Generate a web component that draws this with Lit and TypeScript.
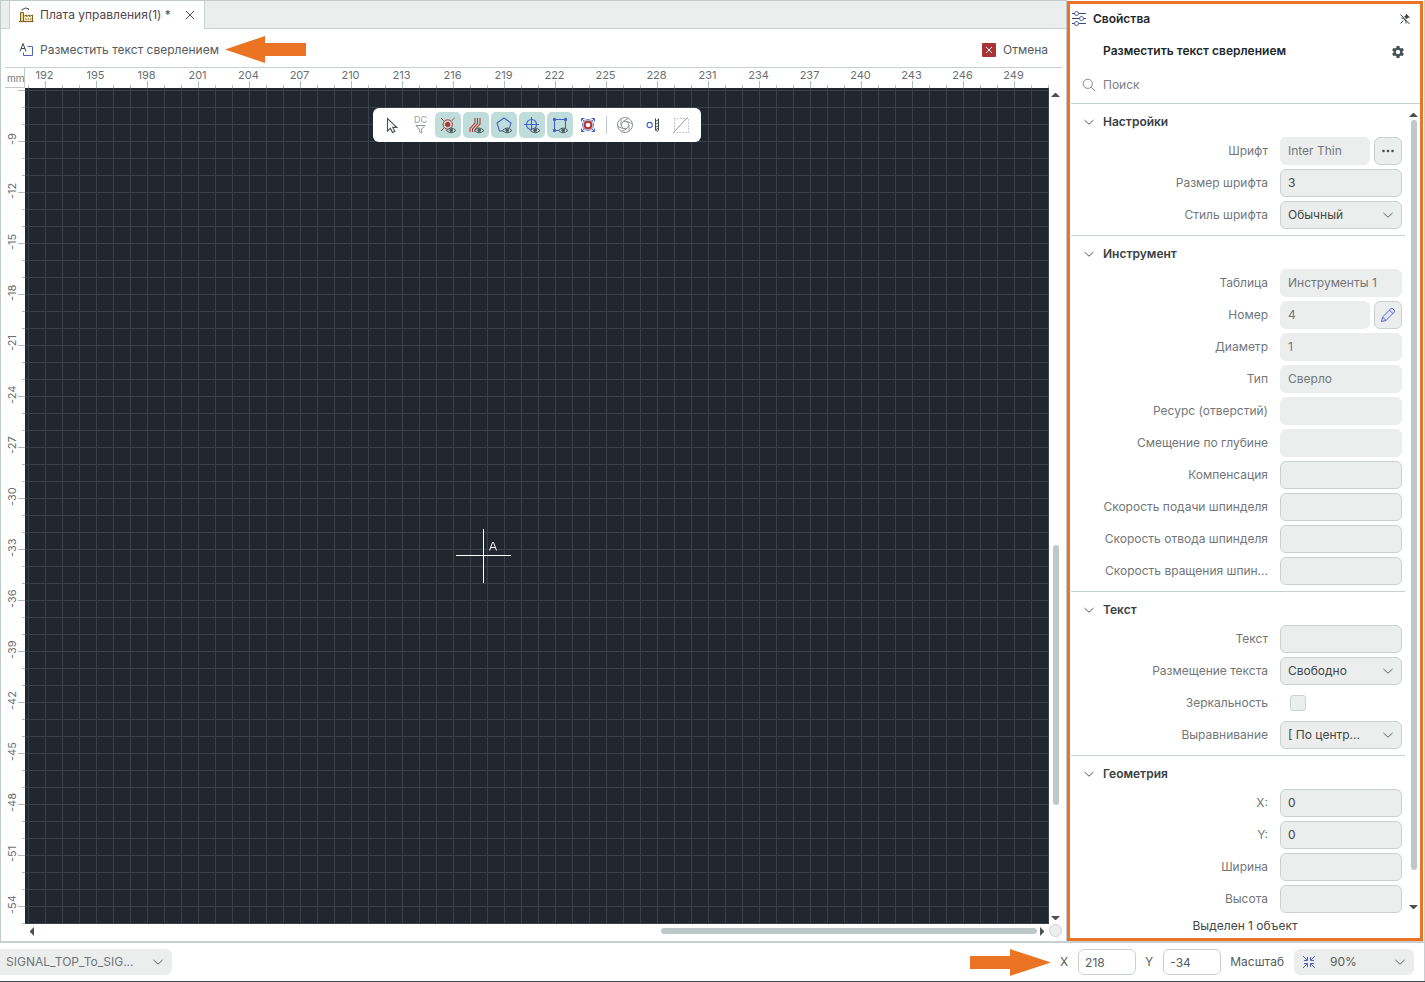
import { LitElement, html, css, svg, nothing } from "lit";
import { customElement } from "lit/decorators.js";

const eye = svg`<g fill="none" stroke="#4b5a5b"><path d="M8.500 15.500q4.700-5 9.400 0q-4.700 4.600-9.400 0z" fill="#bfdedb"/><circle cx="13.200" cy="15.300" r="1.400" fill="#4b5a5b"/></g>`;
const ORANGE = "#ea7423";

const toolIcons = {
  cursor: svg`<path d="M5.500 3.500v12.500l3-2.600 2 4.100 2.300-1-2-4.100h4z" fill="none" stroke="#4a4f55" stroke-width="1.100"/>`,
  dc: svg`<text x="10.500" y="8" text-anchor="middle" font-size="9" fill="#9a9fa1">DC</text><path d="M6 10.500h9l-3.300 3.500v4l-2.400-1.500v-2.500z" fill="none" stroke="#8f9496"/>`,
  pad: svg`<g fill="none" stroke="#b5332f"><circle cx="9.700" cy="9.500" r="4.700"/><circle cx="9.700" cy="9.500" r="2.200" fill="#b5332f"/><path d="M3 3l2.800 2.800M16.500 3l-2.800 2.800M3 16l2.800-2.800"/></g>${eye}`,
  tracks: svg`<g fill="none" stroke="#b5332f" stroke-width="1.100"><path d="M4 17v-3.500l5-5.500v-5M6.500 17v-3l5-5.500v-5.500M9 17v-2.500l5-5.500v-6"/></g>${eye}`,
  polygon: svg`<path d="M10 3l7 5-2.500 8h-9l-2.500-8z" fill="none" stroke="#4461c9" stroke-width="1.100"/>${eye}`,
  target: svg`<g fill="none" stroke="#4461c9" stroke-width="1.100"><circle cx="9.500" cy="9.500" r="5"/><path d="M9.500 2v15M2 9.500h15"/></g>${eye}`,
  rect: svg`<g fill="none" stroke="#4461c9" stroke-width="1.100"><path d="M5 4.500h10M4.500 5v10M15.500 5v10M5 15.500h10"/><circle cx="4.500" cy="4.500" r="1.100" fill="#4461c9"/><circle cx="15.500" cy="4.500" r="1.100" fill="#4461c9"/><circle cx="4.500" cy="15.500" r="1.100" fill="#4461c9"/></g>${eye}`,
  snap: svg`<g fill="none"><path d="M3.500 6.500v-3h3M13.500 3.500h3v3M16.500 13.500v3h-3M6.500 16.500h-3v-3M3.500 3.500l3 3M16.500 3.500l-3 3M3.500 16.500l3-3M16.500 16.500l-3-3" stroke="#4461c9"/><circle cx="10" cy="10" r="5.500" stroke="#4461c9" stroke-width=".8"/><circle cx="10" cy="10" r="3.400" stroke="#b5332f" stroke-width="2.200"/></g>`,
  aperture: svg`<g fill="none" stroke="#92979a"><circle cx="10" cy="10" r="7.500"/><path d="M8 6.500h4l2 3.500-2 3.500h-4l-2-3.500zM8 6.500l5.500-3.200M12 6.500l5.300 2M14 10v6.300M12 13.500l-5.500 3.200M8 13.500l-5.300-2M6 10v-6.300"/></g>`,
  drill: svg`<circle cx="6.700" cy="10" r="2.600" fill="none" stroke="#4461c9" stroke-width="1.100"/><path d="M12.500 3.500v11.500l1.500 1.500 1.500-1.500v-11.500M12.500 6.500l3-2M12.500 9.500l3-2M12.500 12.500l3-2M12.500 15l3-2" fill="none" stroke="#3f4448"/>`,
  hatch: svg`<g fill="none" stroke="#8f9496"><rect x="3.500" y="3.500" width="14" height="14" stroke-dasharray="1 2"/><path d="M2.500 17.500l14-15"/></g>`,
};

type ToolName = keyof typeof toolIcons;

const tools: { id: ToolName; title: string; on?: boolean }[] = [
  { id: "cursor", title: "Выбор" },
  { id: "dc", title: "Фильтр" },
  { id: "pad", title: "Площадки", on: true },
  { id: "tracks", title: "Проводники", on: true },
  { id: "polygon", title: "Полигоны", on: true },
  { id: "target", title: "Отверстия", on: true },
  { id: "rect", title: "Контуры", on: true },
  { id: "snap", title: "Привязка" },
];
const extraTools: { id: ToolName; title: string; on?: boolean }[] = [
  { id: "aperture", title: "Апертуры" },
  { id: "drill", title: "Сверло" },
  { id: "hatch", title: "Штриховка" },
];

interface Field {
  label: string;
  value?: string;
  kind?: "readonly" | "select" | "check";
  action?: "more" | "edit";
}

const sections: { title: string; fields: Field[] }[] = [
  {
    title: "Настройки",
    fields: [
      { label: "Шрифт", value: "Inter Thin", kind: "readonly", action: "more" },
      { label: "Размер шрифта", value: "3" },
      { label: "Стиль шрифта", value: "Обычный", kind: "select" },
    ],
  },
  {
    title: "Инструмент",
    fields: [
      { label: "Таблица", value: "Инструменты 1", kind: "readonly" },
      { label: "Номер", value: "4", kind: "readonly", action: "edit" },
      { label: "Диаметр", value: "1", kind: "readonly" },
      { label: "Тип", value: "Сверло", kind: "readonly" },
      { label: "Ресурс (отверстий)", kind: "readonly" },
      { label: "Смещение по глубине", kind: "readonly" },
      { label: "Компенсация" },
      { label: "Скорость подачи шпинделя" },
      { label: "Скорость отвода шпинделя" },
      { label: "Скорость вращения шпин..." },
    ],
  },
  {
    title: "Текст",
    fields: [
      { label: "Текст" },
      { label: "Размещение текста", value: "Свободно", kind: "select" },
      { label: "Зеркальность", kind: "check" },
      { label: "Выравнивание", value: "[ По центр...", kind: "select" },
    ],
  },
  {
    title: "Геометрия",
    fields: [
      { label: "X:", value: "0" },
      { label: "Y:", value: "0" },
      { label: "Ширина" },
      { label: "Высота" },
    ],
  },
];

const base = css`
  * { box-sizing: border-box; }
  svg { display: block; flex: none; }
  button, input, select { font: inherit; color: inherit; margin: 0; outline: none; }
  button { border: 0; padding: 0; background: none; display: flex; align-items: center; }
  .chevron { fill: none; stroke: #566062; stroke-width: 1; }
  .pick { position: relative; display: block; }
  .pick select { appearance: none; width: 100%; border: 0; background: #eceeed; }
  .pick .chevron { position: absolute; right: 8px; top: 50%; margin-top: -5px; pointer-events: none; }
`;

const chevron = html`<svg class="chevron" width="12" height="10" viewBox="0 0 12 10"><path d="M1.500 3L6 7.200l4.500-4.200" /></svg>`;
const triangle = (points: string, w: number, h: number) =>
  html`<svg width=${w} height=${h} viewBox="0 0 ${w} ${h}"><polygon points=${points} fill="#4b5254" /></svg>`;
const up = triangle("0,5 4,1 5,1 9,5", 9, 5);
const down = triangle("0,0 9,0 5,4 4,4", 9, 5);
const left = triangle("5,0 5,9 1,5 1,4", 5, 9);
const right = triangle("0,0 0,9 4,5 4,4", 5, 9);

@customElement("board-canvas")
export class BoardCanvas extends LitElement {
  static styles = [
    base,
    css`
      :host { display: grid; min-width: 0; min-height: 0; flex: 1; margin-right: 4px; overflow: hidden;
        grid-template-columns: 24px minmax(0, 1fr) 13px; grid-template-rows: 20px minmax(0, 1fr) 17px; }
      .corner { margin-left: 4px; border-right: 1px solid #c3cbca; border-bottom: 1px solid #c3cbca;
        font-size: 10px; line-height: 20px; padding-left: 2px; color: #74797b; }
      .top, .side { display: flex; overflow: hidden; font-size: 11px; color: #696f71; }
      .top { background:
          repeating-linear-gradient(90deg, #b4bcbb 0 1px, transparent 1px 51px) 20px 100% / 100% 7px no-repeat,
          repeating-linear-gradient(90deg, #b4bcbb 0 1px, transparent 1px 17px) 3px 100% / 100% 3px no-repeat; }
      .top span { flex: none; width: 51px; text-align: center; line-height: 15px; }
      .top span:first-child { margin-left: -6px; }
      .side { flex-direction: column; background:
          repeating-linear-gradient(180deg, #b4bcbb 0 1px, transparent 1px 51px) 100% 2px / 7px 100% no-repeat,
          repeating-linear-gradient(180deg, #b4bcbb 0 1px, transparent 1px 17px) 100% 2px / 3px 100% no-repeat; }
      .side span { flex: none; height: 51px; width: 20px; margin-left: 1px; writing-mode: vertical-rl; transform: rotate(180deg);
        text-align: center; line-height: 20px; }
      .side span:first-child { margin-top: 26px; }
      .board { position: relative; overflow: hidden; background-color: #20272f; background-image:
          repeating-linear-gradient(90deg, #39424a 0 1px, transparent 1px 17px),
          repeating-linear-gradient(180deg, #39424a 0 1px, transparent 1px 17px);
        background-position: -14px -15px; background-size: calc(100% + 17px) calc(100% + 17px); }
      .tools { position: absolute; top: 20px; left: 50%; transform: translateX(-50%); display: flex; align-items: center;
        gap: 2px; padding: 4px 7px 4px 6px; background: #fff; border-radius: 6px; }
      .tools button { width: 26px; height: 26px; justify-content: center; border-radius: 5px; }
      .tools .on { background: #bfdedb; }
      .split { width: 1px; height: 18px; margin: 0 3px; background: #c3cbca; }
      .cross { position: absolute; left: 431px; top: 440px; }
      .vbar { display: flex; flex-direction: column; align-items: center; padding: 4px 0 3px; }
      .vtrack { flex: 1; width: 6px; display: flex; flex-direction: column; }
      .hbar { grid-column: 1 / 3; display: flex; align-items: center; padding: 0 4px 3px 28px; }
      .htrack { flex: 1; display: flex; margin-right: 3px; }
      .thumb { background: #bdc9c8; border-radius: 3px; }
      .vtrack::before { content: ""; flex: 446; }
      .vtrack .thumb { flex: 259; }
      .vtrack::after { content: ""; flex: 110; }
      .htrack::before { content: ""; flex: 627; }
      .htrack .thumb { flex: 376; height: 6px; }
      .knob { width: 13px; height: 13px; border-radius: 50%; background: #ebeeed; border: 1px solid #cdd3d2; }
    `,
  ];

  private tool(t: { id: ToolName; title: string; on?: boolean }) {
    return html`<button class=${t.on ? "on" : ""} title=${t.title} aria-label=${t.title}>
      <svg width="20" height="20" viewBox="0 0 20 20" overflow="visible">${toolIcons[t.id]}</svg>
    </button>`;
  }

  render() {
    const xs = Array.from({ length: 20 }, (_, i) => 192 + i * 3);
    const ys = Array.from({ length: 16 }, (_, i) => -9 - i * 3);
    return html`
      <div class="corner">mm</div>
      <div class="top">${xs.map((x) => html`<span>${x}</span>`)}</div>
      <div></div>
      <div class="side">${ys.map((y) => html`<span>${y}</span>`)}</div>
      <div class="board">
        <div class="tools">
          ${tools.map((t) => this.tool(t))}
          <span class="split"></span>
          ${extraTools.map((t) => this.tool(t))}
        </div>
        <svg class="cross" width="56" height="56" viewBox="0 0 56 56" fill="none" stroke="#fff">
          <path d="M27.500 1v54M0 27.500h55" />
          <path d="M33.500 22.500l3-8h1l3 8M35 19.500h4.500" />
        </svg>
      </div>
      <div class="vbar">${up}<div class="vtrack"><div class="thumb"></div></div>${down}</div>
      <div class="hbar">${left}<div class="htrack"><div class="thumb"></div></div>${right}</div>
      <div class="knob"></div>
    `;
  }
}

@customElement("property-panel")
export class PropertyPanel extends LitElement {
  static styles = [
    base,
    css`
      :host { display: flex; flex-direction: column; flex: none; width: 356px; margin: 1px 1px 0 0; border: 3px solid #ea7423; background: #fff; color: #41484a; }
      .head { display: flex; align-items: center; height: 30px; padding: 0 9px 0 2px; gap: 7px; font-weight: 600; color: #23282b; }
      .head h2, .title h3, .section h4 { font: inherit; margin: 0; flex: 1; }
      .title { display: flex; align-items: center; height: 34px; padding: 0 15px 0 33px; font-weight: 600; color: #23282b; }
      .search { display: flex; align-items: center; gap: 7px; height: 36px; margin-left: 1px; padding: 0 0 2px 11px; border-bottom: 1px solid #c9d1d0; }
      .search input { border: 0; flex: 1; padding: 0; background: none; }
      .search input::placeholder { color: #7b8082; opacity: 1; }
      .body { display: flex; flex: 1; min-height: 0; }
      .list { flex: 1; min-width: 0; margin-left: 1px; }
      .section { padding-bottom: 6px; border-bottom: 1px solid #c9d1d0; }
      .section:last-child { border-bottom: 0; padding-bottom: 0; }
      .section header { display: flex; align-items: center; height: 33px; padding: 3px 0 0 12px; gap: 8px; font-weight: 600; color: #394144; }
      .rows { display: grid; gap: 4px; padding-right: 3px; }
      .row { display: grid; grid-template-columns: minmax(0, 1fr) 122px; column-gap: 12px; align-items: center; height: 28px; }
      .row label { text-align: right; color: #727779; white-space: nowrap; }
      .cell { display: flex; gap: 4px; height: 28px; align-items: center; }
      .cell input[type="text"], .cell select { width: 100%; min-width: 0; height: 28px; padding: 0 7px; border: 1px solid #cad1d0; border-radius: 6px; background: #eceeed; }
      .cell input[type="text"] { padding-bottom: 2px; }
      .cell input[readonly] { border-color: #eceeed; color: #727779; }
      .cell .pick { flex: 1; }
      .cell button { flex: none; width: 28px; height: 28px; justify-content: center; border: 1px solid #cad1d0; border-radius: 6px; background: #eceeed; }
      .cell input[type="checkbox"] { appearance: none; width: 16px; height: 16px; margin-left: 10px; border: 1px solid #cad1d0; border-radius: 3px; background: #eceeed; }
      .bar { width: 15px; display: flex; flex-direction: column; align-items: center; padding: 8px 0 3px 2px; }
      .track { flex: 1; width: 6px; margin: 3px 0; display: flex; flex-direction: column; }
      .thumb { flex: 751; background: #bdc9c8; border-radius: 3px; }
      .track::after { content: ""; flex: 32; }
      .foot { text-align: center; line-height: 25px; color: #41484a; }
    `,
  ];

  private control(f: Field, id: string) {
    if (f.kind === "check") return html`<input id=${id} type="checkbox" />`;
    if (f.kind === "select")
      return html`<span class="pick"><select id=${id}><option>${f.value}</option></select>${chevron}</span>`;
    return html`<input id=${id} type="text" .value=${f.value ?? ""} ?readonly=${f.kind === "readonly"} />`;
  }

  private action(kind?: "more" | "edit") {
    if (kind === "more")
      return html`<button aria-label="Выбрать шрифт"><svg width="14" height="4" viewBox="0 0 14 4" fill="#4a5153"><circle cx="2.500" cy="2" r="1.300" /><circle cx="7" cy="2" r="1.300" /><circle cx="11.500" cy="2" r="1.300" /></svg></button>`;
    if (kind === "edit")
      return html`<button aria-label="Изменить"><svg width="16" height="16" viewBox="0 0 16 16" fill="#dfe5fa" stroke="#5468c4" stroke-linejoin="round"><path d="M1.500 14.500l1-4.500L10.800 1.800q1-.9 2 0l1.400 1.400q.9 1 0 2L6 13.500zM2.500 10l3.500 3.500M9.500 3.200l3.400 3.400" /></svg></button>`;
    return nothing;
  }

  render() {
    return html`
      <div class="head">
        <svg width="14" height="16" viewBox="0 0 14 16" fill="#fff" stroke="#4d62b8"><path d="M0 2.500h14M0 7.500h14M0 12.500h14" stroke="#3e4a6c" /><circle cx="4.500" cy="2.500" r="2" /><circle cx="9.500" cy="7.500" r="2" /><circle cx="4.500" cy="12.500" r="2" /></svg>
        <h2>Свойства</h2>
        <button aria-label="Открепить"><svg width="12" height="12" viewBox="0 0 12 12" fill="none" stroke="#3f4648"><path d="M1.500 1.500l9 9.500M1.500 10.500l3-3" /><path d="M7 .5l4 4-2 .3-1.200 1.500L5 3.500l1.700-1z" fill="#3f4648" stroke="none" /><path d="M2.500 5l2 .5 2.500 2.500v2.500" /></svg></button>
      </div>
      <div class="title">
        <h3>Разместить текст сверлением</h3>
        <button aria-label="Параметры"><svg width="14" height="14" viewBox="0 0 14 14"><g fill="none" stroke="#455053"><circle cx="7" cy="8" r="3.400" stroke-width="2.400" /><path d="M7 2v2M7 12v2M1.800 5l1.700 1M10.500 10l1.700 1M1.800 11l1.700-1M10.500 6l1.700-1" stroke-width="3" /></g></svg></button>
      </div>
      <label class="search">
        <svg width="14" height="14" viewBox="0 0 14 14" fill="none" stroke="#85898b"><circle cx="5.800" cy="5.800" r="4.600" /><path d="M9.200 9.200l4 4" /></svg>
        <input type="text" placeholder="Поиск" aria-label="Поиск" />
      </label>
      <div class="body">
        <div class="list">
          ${sections.map(
            (s, i) => html`<section class="section">
              <header>${chevron}<h4>${s.title}</h4></header>
              <div class="rows">
                ${s.fields.map((f, j) => {
                  const id = `f${i}-${j}`;
                  return html`<div class="row"><label for=${id}>${f.label}</label><div class="cell">${this.control(f, id)}${this.action(f.action)}</div></div>`;
                })}
              </div>
            </section>`,
          )}
        </div>
        <div class="bar">${up}<div class="track"><div class="thumb"></div></div>${down}</div>
      </div>
      <div class="foot">Выделен 1 объект</div>
    `;
  }
}

@customElement("app-root")
export class AppRoot extends LitElement {
  static styles = [
    base,
    css`
      :host { display: flex; flex-direction: column; box-sizing: border-box; height: 100vh; overflow: hidden; background: #fff;
        font: 400 12px/16px Inter, "Noto Sans", sans-serif; color: #555c5e; border: solid #45484a; border-width: 0 0 1px; }
      .main { display: flex; flex: 1; min-height: 0; border: solid #c9cfce; border-width: 0 1px 2px 0; }
      .editor { display: flex; flex-direction: column; flex: 1; min-width: 0; border: solid #c3cbca; border-width: 1px 1px 0 1px; }
      .tabs { display: flex; height: 28px; background: #ebeeed; border-bottom: 1px solid #c9d1d0; padding-left: 8px; }
      .tab { display: flex; align-items: center; height: 28px; padding: 0 9px; background: #fff; border: solid #c9d1d0; border-width: 0 1px; color: #52464f; }
      .tab svg { margin-right: 6px; }
      .tab button { margin-left: 14px; }
      .tab button svg { margin: 0; }
      .bar { display: flex; align-items: center; height: 39px; margin: 0 4px; padding: 3px 14px 0; border-bottom: 1px solid #c9d1d0; }
      .bar button { gap: 6px; }
      .bar .arrow { margin-left: 6px; }
      .bar .cancel { margin-left: auto; gap: 7px; }
      .status { display: flex; align-items: center; height: 38px; padding-right: 10px; border-right: 1px solid #c9cfce; }
      .status select { height: 26px; padding: 0 30px 0 6px; color: #6e7476; }
      .layers { width: 172px; margin-right: auto; }
      .layers select { border-radius: 0 6px 6px 0; }
      .status label { margin: 0 10px 0 9px; }
      .status input { width: 58px; height: 26px; border: 1px solid #cad1d0; border-radius: 6px; padding: 0 6px; background: #fff; }
      .zoom { width: 120px; }
      .zoom select { border-radius: 6px; padding-left: 36px; color: #555c5e; }
      .zoom .fit { position: absolute; left: 8px; top: 6px; pointer-events: none; }
    `,
  ];

  render() {
    return html`
      <div class="main">
        <div class="editor">
          <div class="tabs">
            <div class="tab">
              <svg width="15" height="16" viewBox="0 0 15 16" fill="none" stroke="#7d6322"><path d="M1.500 14.500v-9h3v9" fill="#f0d48a" /><path d="M4.500 9.500l3-1.500v1.500l3-1.500v1.500l3-1.500v6.500h-9z" fill="#fbefcb" /><path d="M0 14.500h14.500" stroke-width="1.200" /><path d="M6 12h1.500M8.500 12h1.500M11 12h1.500" /><path d="M3 3.500q0-2 2-1.500q1-2 3-.5q2-.5 1.500 1.500" stroke="#444a4c" /></svg>
              <span>Плата управления(1) *</span>
              <button aria-label="Закрыть"><svg width="10" height="10" viewBox="0 0 10 10" fill="none" stroke="#4c5456"><path d="M1 1l8 8M9 1l-8 8" /></svg></button>
            </div>
          </div>
          <div class="bar">
            <button>
              <svg width="15" height="15" viewBox="0 0 15 15" fill="none"><path d="M1 9.500L4 1.500l3 8M2 6.500h4" stroke="#3f4648" /><path d="M8.500 4.500h5v9h-9v-3" stroke="#4d62b8" /></svg>
              Разместить текст сверлением
            </button>
            <svg class="arrow" width="81" height="27" viewBox="0 0 81 27"><path d="M0 13.500L40 0v7h41v13H40v7z" fill=${ORANGE} /></svg>
            <button class="cancel">
              <svg width="14" height="14" viewBox="0 0 14 14"><rect width="14" height="14" rx="1" fill="#a93234" /><path d="M4 4l6 6M10 4l-6 6" stroke="#fff" /></svg>
              Отмена
            </button>
          </div>
          <board-canvas></board-canvas>
        </div>
        <property-panel></property-panel>
      </div>
      <div class="status">
        <span class="pick layers"><select aria-label="Пара слоёв"><option>SIGNAL_TOP_To_SIG...</option></select>${chevron}</span>
        <svg width="81" height="27" viewBox="0 0 81 27"><path d="M81 13.500L40 0v7H0v13h40v7z" fill=${ORANGE} /></svg>
        <label for="cx">X</label><input id="cx" type="text" value="218" />
        <label for="cy">Y</label><input id="cy" type="text" value="-34" />
        <label for="zoom">Масштаб</label>
        <span class="pick zoom">
          <svg class="fit" width="14" height="14" viewBox="0 0 14 14" fill="none" stroke="#4d62b8"><path d="M1 1l4 4M5.500 2v3.500H2M13 1L9 5M8.500 2v3.500H12M1 13l4-4M2 8.500h3.500V12M13 13L9 9M12 8.500H8.500V12" /></svg>
          <select id="zoom"><option>90%</option></select>${chevron}
        </span>
      </div>
    `;
  }
}
